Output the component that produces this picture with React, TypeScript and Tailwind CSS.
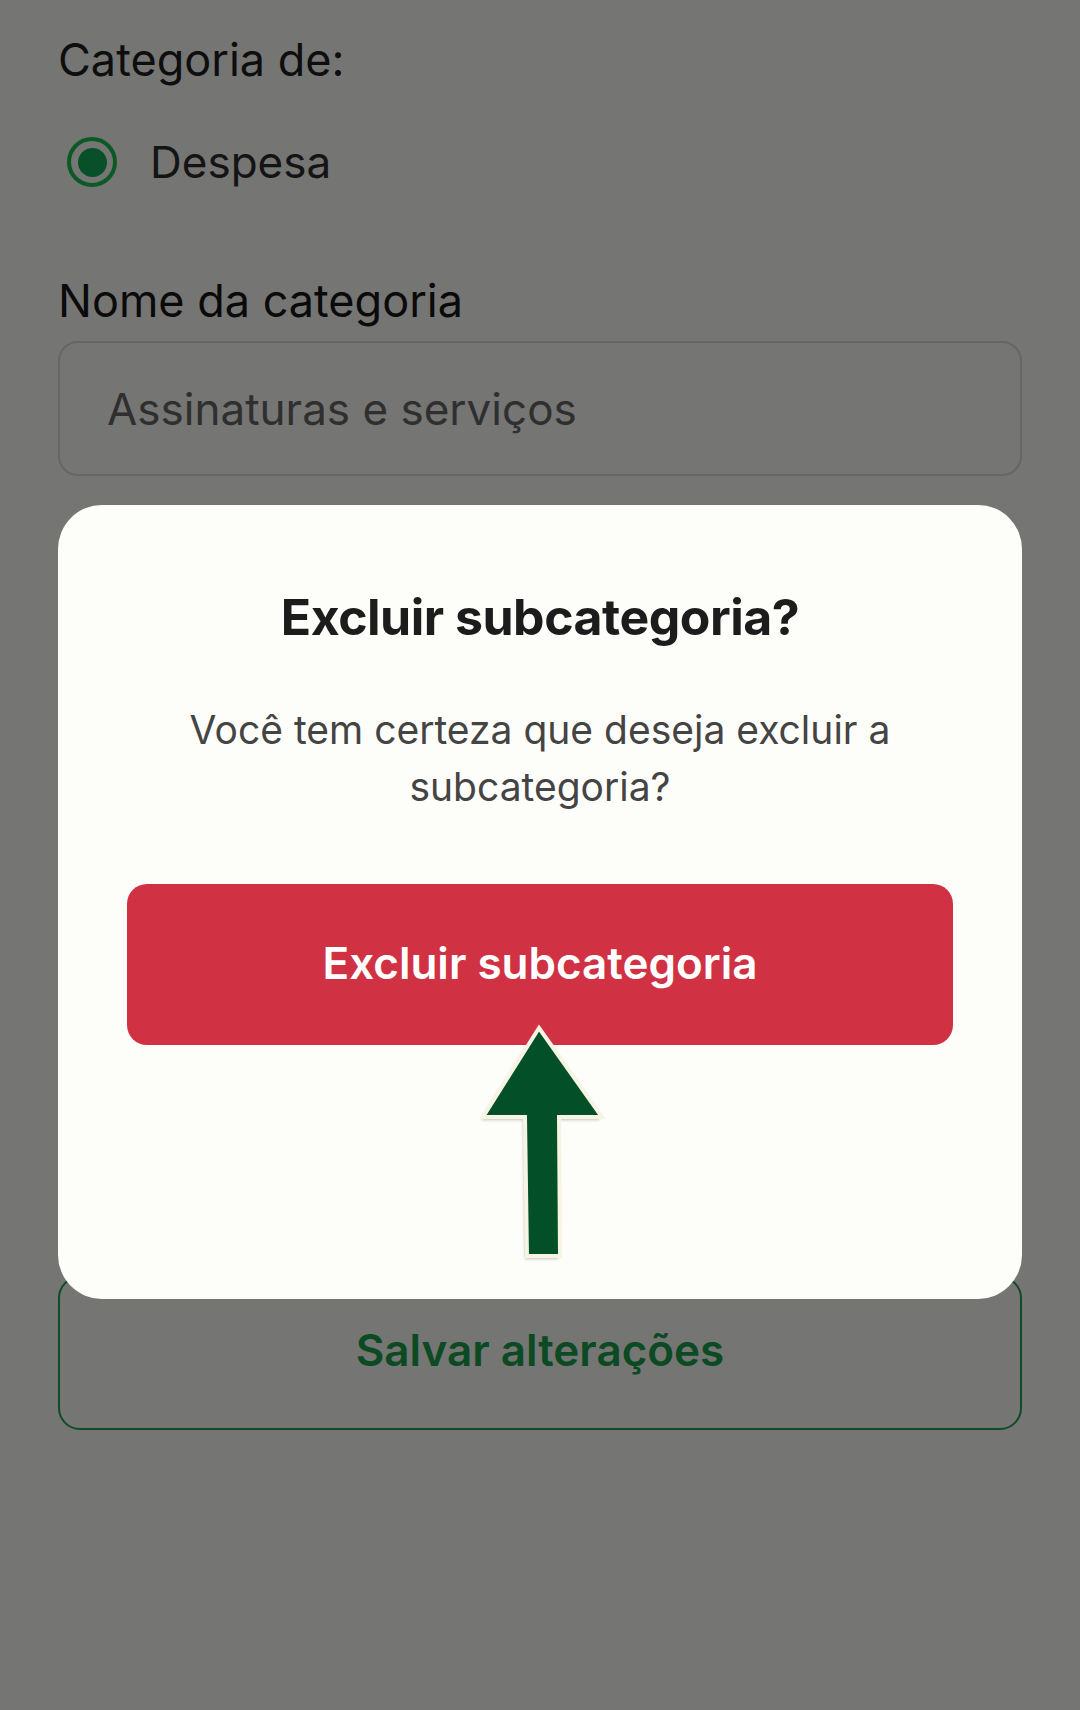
import React from 'react';

// Arrow annotation drawn on top of the dialog
const UpArrow: React.FC = () => (
    <svg
        className="absolute left-[475px] top-[1020px]"
        width="135"
        height="245"
        viewBox="0 0 135 245"
    >
        <defs>
            <filter id="arrowShadow" x="-20%" y="-20%" width="140%" height="140%">
                <feGaussianBlur stdDeviation="1.5" />
            </filter>
        </defs>
        <polygon
            points="64,8 127,97 84,97 85,236 52,236 50,97 8,97"
            transform="translate(-2,3)"
            fill="#8a8a86"
            opacity="0.5"
            filter="url(#arrowShadow)"
        />
        <polygon
            points="64,8 127,97 84,97 85,236 52,236 50,97 8,97"
            fill="#034f27"
            stroke="#f7f4e4"
            strokeWidth="4"
            strokeLinejoin="miter"
        />
    </svg>
);

const App: React.FC = () => {
    return (
        <div
            className="relative w-[1080px] h-[1710px] overflow-hidden bg-[#757573]"
            style={{ fontFamily: 'Inter, "Noto Sans", sans-serif' }}
        >
            {/* page behind the dialog (already dimmed) */}
            <div className="px-[58px] pt-[33px]">
                <p className="text-[45px] leading-[54px] text-[#0e0e0e]">Categoria de:</p>

                <div className="mt-[48px] flex h-[54px] items-center">
                    <div className="ml-[9px] flex h-[50px] w-[50px] items-center justify-center rounded-full border-[4px] border-[#0b5a26]">
                        <div className="h-[29px] w-[29px] rounded-full bg-[#07502a]" />
                    </div>
                    <span className="ml-[33px] text-[44px] leading-[54px] text-[#141414]">Despesa</span>
                </div>

                <p className="mt-[85px] text-[45px] leading-[54px] text-[#0a0a0a]">Nome da categoria</p>

                <div className="mt-[13px] flex h-[135px] items-center rounded-[20px] border-2 border-[#666664] pl-[47px]">
                    <span className="text-[44px] leading-[54px] text-[#2f2f2f]">Assinaturas e serviços</span>
                </div>

                <button className="mt-[800px] flex h-[154px] w-full items-center justify-center rounded-[22px] border-2 border-[#0d4d26] pb-[6px]">
                    <span className="text-[44px] font-semibold leading-[54px] text-[#0b4a23]">Salvar alterações</span>
                </button>
            </div>

            {/* dialog */}
            <div className="absolute inset-0 px-[58px] pt-[505px]">
                <div className="flex h-[794px] flex-col items-center rounded-[44px] bg-[#fdfdf9] px-[69px] pt-[83px]">
                    <h2 className="text-[50px] font-bold leading-[58px] tracking-[-0.5px] text-[#1c1c1c]">
                        Excluir subcategoria?
                    </h2>
                    <p className="mt-[55px] text-center text-[39px] leading-[57px] text-[#444444]">
                        Você tem certeza que deseja excluir a
                        <br />
                        subcategoria?
                    </p>
                    <button className="mt-[69px] flex h-[161px] w-full items-center justify-center rounded-[20px] bg-[#d03244] pb-[4px]">
                        <span className="text-[44px] font-semibold leading-[54px] text-white">Excluir subcategoria</span>
                    </button>
                </div>
            </div>

            <UpArrow />
        </div>
    );
};

export default App;
